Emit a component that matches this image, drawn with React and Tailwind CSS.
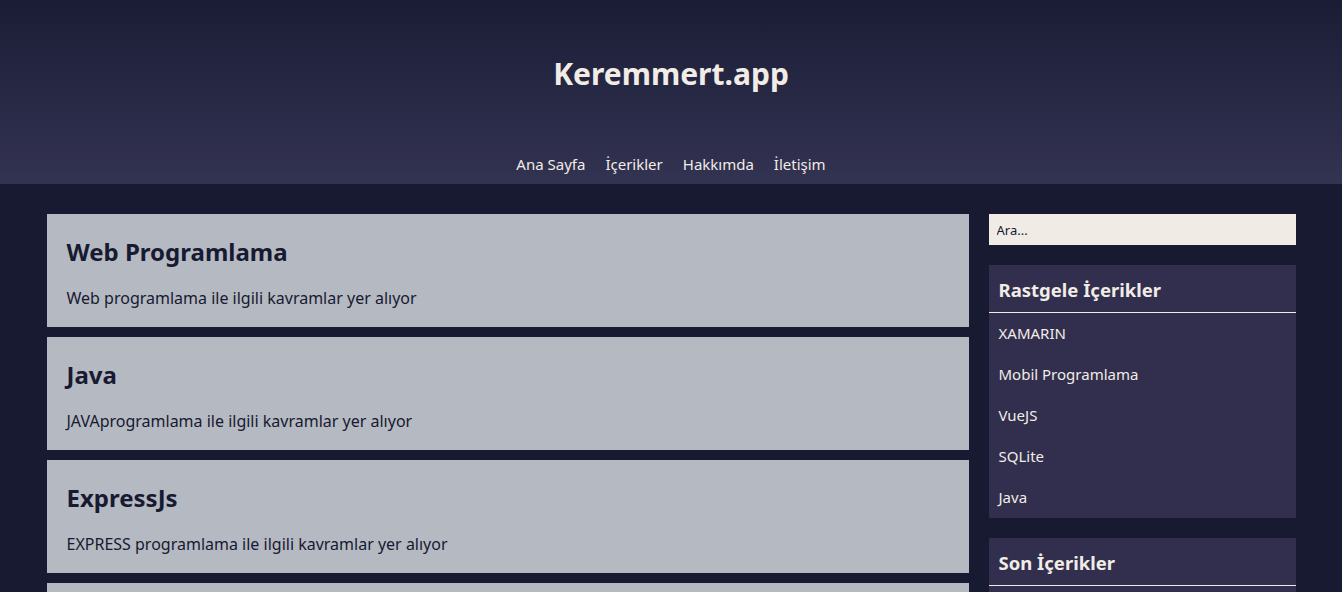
export default function App() {
  const posts = [
    { title: 'Web Programlama', text: 'Web programlama ile ilgili kavramlar yer alıyor' },
    { title: 'Java', text: 'JAVAprogramlama ile ilgili kavramlar yer alıyor' },
    { title: 'ExpressJs', text: 'EXPRESS programlama ile ilgili kavramlar yer alıyor' },
    { title: 'VueJS', text: 'VueJS programlama ile ilgili kavramlar yer alıyor' },
  ];
  const random = ['XAMARIN', 'Mobil Programlama', 'VueJS', 'SQLite', 'Java'];
  const latest = ['Java', 'VueJS', 'SQLite'];

  return (
    <div className="min-h-screen bg-[#171a31] font-['Noto_Sans',sans-serif]">
      <header className="h-[184px] bg-gradient-to-b from-[#1b1d36] to-[#333352] flex flex-col items-center">
        <h1 className="mt-[53px] text-[30px] leading-[42px] font-bold text-[#f1ece6]">Keremmert.app</h1>
        <nav className="mt-[58px] flex gap-5 text-[15px] text-[#f1ece6]">
          <a href="#">Ana Sayfa</a>
          <a href="#">İçerikler</a>
          <a href="#">Hakkımda</a>
          <a href="#">İletişim</a>
        </nav>
      </header>

      <div className="mx-auto w-[1249px] pt-[30px] flex gap-5">
        <main className="w-[922px] flex flex-col gap-[10px]">
          {posts.map((p) => (
            <article key={p.title} className="h-[113px] bg-[#b5b9c2] px-5 pt-[21px]">
              <h2 className="text-[24px] leading-[33px] font-bold text-[#171a31]">{p.title}</h2>
              <p className="mt-[19px] text-[16px] leading-[22px] text-[#171a31]">{p.text}</p>
            </article>
          ))}
        </main>

        <aside className="w-[307px] flex flex-col gap-5">
          <input
            placeholder="Ara..."
            className="h-[31px] w-full bg-[#f0ebe5] px-2 text-[13px] text-[#171a31] placeholder:text-[#171a31] outline-none"
          />
          <section className="bg-[#312f4d] text-[#f1ece6]">
            <h3 className="h-[48px] px-[10px] pt-[11px] text-[18.5px] font-bold border-b border-[#f1ece6]">Rastgele İçerikler</h3>
            <ul>
              {random.map((r) => (
                <li key={r} className="h-[41px] px-[10px] flex items-center text-[15px]">{r}</li>
              ))}
            </ul>
          </section>
          <section className="bg-[#312f4d] text-[#f1ece6]">
            <h3 className="h-[48px] px-[10px] pt-[11px] text-[18.5px] font-bold border-b border-[#f1ece6]">Son İçerikler</h3>
            <ul>
              {latest.map((r) => (
                <li key={r} className="h-[41px] px-[10px] flex items-center text-[15px]">{r}</li>
              ))}
            </ul>
          </section>
        </aside>
      </div>
    </div>
  );
}
